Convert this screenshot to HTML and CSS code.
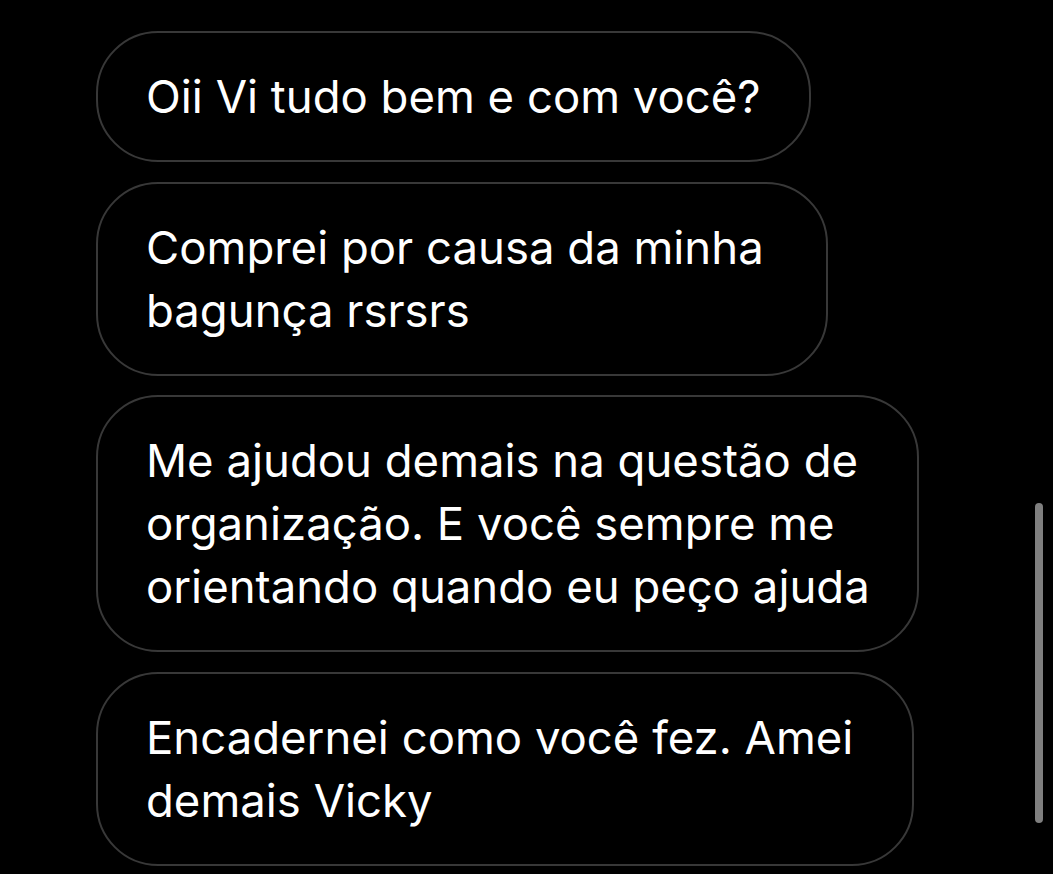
FILE: index.html
```html
<!DOCTYPE html>
<html lang="pt-BR">
<head>
<meta charset="utf-8">
<title>Mensagens</title>
<link rel="stylesheet" href="styles.css">
</head>
<body>
<main class="thread">
  <div class="bubble b1">Oii Vi tudo bem e com você?</div>
  <div class="bubble b2">Comprei por causa da minha<br>bagunça rsrsrs</div>
  <div class="bubble b3">Me ajudou demais na questão de<br>organização. E você sempre me<br>orientando quando eu peço ajuda</div>
  <div class="bubble b4">Encadernei como você fez. Amei<br>demais Vicky</div>
</main>
<div class="scrollbar"></div>
</body>
</html>
```
FILE: styles.css
```css
html, body {
  margin: 0;
  padding: 0;
  background: #000;
  height: 100%;
  overflow: hidden;
}
body {
  font-family: Inter, "Liberation Sans", sans-serif;
  color: #fff;
}
.thread {
  display: flex;
  flex-direction: column;
  align-items: flex-start;
  gap: 19.5px;
  padding: 31px 0 0 96px;
}
.bubble {
  box-sizing: border-box;
  border: 2px solid #383838;
  border-radius: 62px;
  padding: 32px 40px 32px 48px;
  font-size: 45.5px;
  line-height: 63px;
  letter-spacing: 0;
  white-space: nowrap;
}
.b1 { width: 715px; }
.b2 { width: 732px; }
.b3 { width: 823px; }
.b4 { width: 818px; }
.scrollbar {
  position: absolute;
  left: 1035px;
  top: 503px;
  width: 8px;
  height: 320px;
  border-radius: 4px;
  background: #7f7f7f;
}
```
